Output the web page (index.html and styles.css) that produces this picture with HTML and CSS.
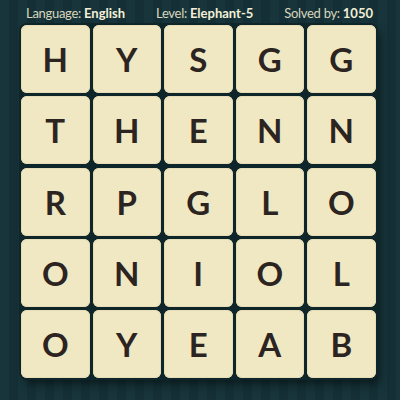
FILE: index.html
```html
<!DOCTYPE html>
<html>
<head>
<meta charset="utf-8">
<link rel="stylesheet" href="styles.css">
</head>
<body>
<div class="page">
  <div class="header">
    <span class="item">Language: <b>English</b></span>
    <span class="item">Level: <b>Elephant-5</b></span>
    <span class="item">Solved by: <b>1050</b></span>
  </div>
  <div class="board">
    <div class="tile">H</div><div class="tile">Y</div><div class="tile">S</div><div class="tile">G</div><div class="tile">G</div>
    <div class="tile">T</div><div class="tile">H</div><div class="tile">E</div><div class="tile">N</div><div class="tile">N</div>
    <div class="tile">R</div><div class="tile">P</div><div class="tile">G</div><div class="tile">L</div><div class="tile">O</div>
    <div class="tile">O</div><div class="tile">N</div><div class="tile">I</div><div class="tile">O</div><div class="tile">L</div>
    <div class="tile">O</div><div class="tile">Y</div><div class="tile">E</div><div class="tile">A</div><div class="tile">B</div>
  </div>
</div>
</body>
</html>
```
FILE: styles.css
```css
html, body {
  margin: 0;
  padding: 0;
}
body {
  width: 400px;
  height: 400px;
  overflow: hidden;
  background-color: #17343a;
  background-image: repeating-linear-gradient(90deg, #17353b 0px, #17353b 9px, #143036 9px, #143036 18px);
  font-family: Lato, "Open Sans", sans-serif;
}
.page {
  display: flex;
  flex-direction: column;
}
.header {
  height: 25px;
  display: flex;
  align-items: center;
  justify-content: space-between;
  padding: 1px 27px 0 26px;
  color: #d9d6bd;
  font-size: 13px;
  letter-spacing: -0.3px;
  box-sizing: border-box;
}
.header b {
  color: #f3efd6;
  font-weight: 700;
  letter-spacing: 0;
}
.board {
  margin-left: 21px;
  display: grid;
  grid-template-columns: repeat(5, 68.5px);
  grid-template-rows: repeat(5, 68px);
  column-gap: 3px;
  row-gap: 3.3px;
  width: max-content;
  background: #0e252a;
  box-shadow: 0 0 0 2px #0e252a, 4px 6px 10px rgba(0,0,0,0.5);
  border-radius: 6px;
}
.tile {
  background: #f0e8c3;
  border-radius: 6px;
  display: flex;
  align-items: center;
  justify-content: center;
  font-size: 33px;
  font-weight: 700;
  color: #2c2420;
  box-shadow: inset 0 0 0 1px #e6ddb6;
}
```
